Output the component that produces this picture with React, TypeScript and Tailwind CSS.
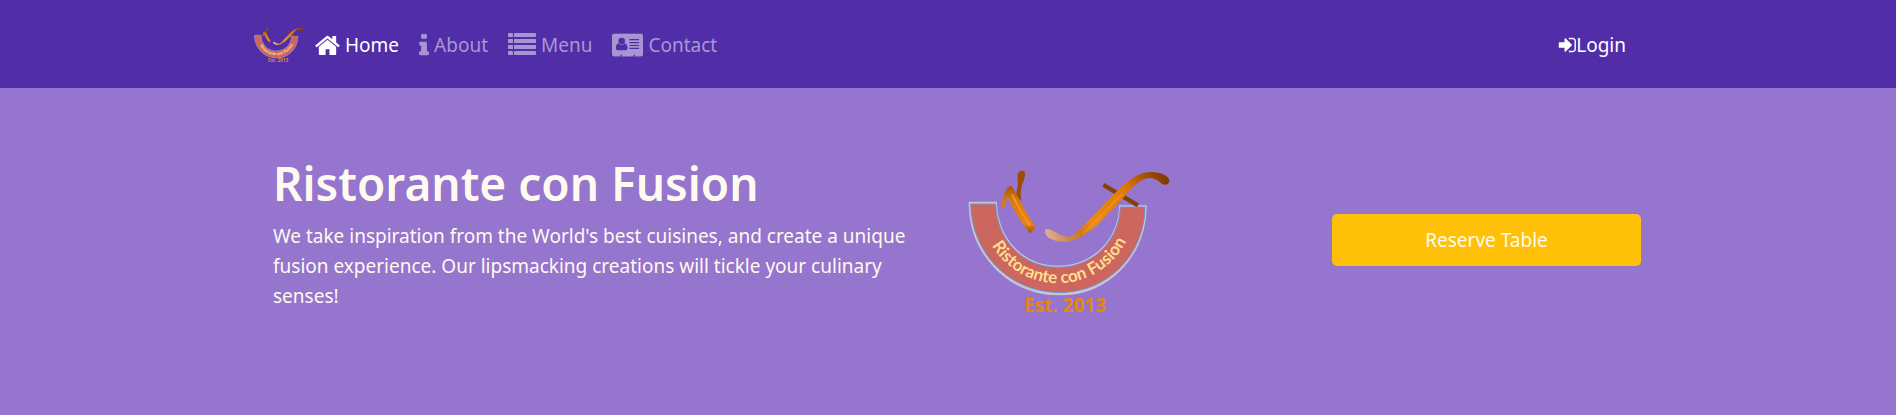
import type { ReactNode } from "react";

function Logo({ id, className }: { id: string; className: string }) {
  return (
    <svg viewBox="54 42 606 450" className={className} role="img" aria-label="Ristorante con Fusion">
      <defs>
        <linearGradient id={`${id}-gold`} x1="0" y1="0" x2="0" y2="1">
          <stop offset="0" stopColor="#a85506" />
          <stop offset="0.3" stopColor="#d87a10" />
          <stop offset="0.8" stopColor="#e88414" />
          <stop offset="1" stopColor="#9a4c00" />
        </linearGradient>
        <linearGradient id={`${id}-fork`} gradientUnits="userSpaceOnUse" x1="285" y1="240" x2="658" y2="75">
          <stop offset="0" stopColor="#e3b391" />
          <stop offset="0.14" stopColor="#c98a5c" />
          <stop offset="0.24" stopColor="#d07a1a" />
          <stop offset="0.36" stopColor="#ec8a16" />
          <stop offset="0.68" stopColor="#dd7a0c" />
          <stop offset="0.84" stopColor="#a65200" />
          <stop offset="1" stopColor="#7c3a00" />
        </linearGradient>
        <path id={`${id}-arc`} d="M94 154A230 231 0 0 0 554 154" />
      </defs>
      <path
        d="M60 144H137C141 252 215 336 324 336C431 336 508 254 511 155H586C584 302 474 417 330 417C174 417 61 294 60 144Z"
        fill="none"
        stroke="#c9c3d6"
        strokeWidth="8"
      />
      <path
        d="M62 147H137C141 254 215 337 324 337C431 337 508 256 511 156H585C583 300 474 412 328 412C176 412 64 292 62 147Z"
        fill="#cd665e"
        stroke="#6c93c8"
        strokeWidth="3"
      />
      <path
        d="M203 72C200 50 211 46 220 48C230 53 224 71 217 88C212 102 211 118 214 138L198 124C200 104 206 90 203 72Z"
        fill="#9c4e04"
      />
      <path
        d="M156 159C154 132 166 101 179 93C188 93 190 101 195 110C215 148 236 188 258 216L240 235C217 208 190 164 173 127C167 136 164 146 164 158Z"
        fill={`url(#${id}-gold)`}
      />
      <path d="M186 118C204 154 222 186 241 213" fill="none" stroke="#f39522" strokeWidth="6" />
      <path d="M466 93L558 148" stroke="#844103" strokeWidth="13" strokeLinecap="square" />
      <path
        d="M286 223C305 217 330 247 358 245C384 234 408 203 437 174L498 111C532 78 563 51 604 51C632 51 656 62 658 77C656 92 642 92 632 84C616 68 598 66 584 72C550 86 530 118 504 147L442 210C410 236 381 257 350 260C316 262 280 249 286 223Z"
        fill={`url(#${id}-fork)`}
      />
      <path d="M402 233C432 207 478 154 518 115" fill="none" stroke="#f99a28" strokeWidth="5" opacity="0.55" />
      <text
        fontFamily='Lato, "Open Sans", sans-serif'
        fontWeight="700"
        fontSize="51"
        fill="#ffdf8e"
        textAnchor="middle"
      >
        <textPath href={`#${id}-arc`} startOffset="51%">Ristorante con Fusion</textPath>
      </text>
      <text
        x="345"
        y="471"
        fontFamily='"Noto Sans", sans-serif'
        fontWeight="700"
        fontSize="57"
        fill="#e8860c"
        textAnchor="middle"
      >
        Est. 2013
      </text>
    </svg>
  );
}

function HomeIcon() {
  return (
    <svg viewBox="64 0 1664 1792" className="h-[27px] w-[25px] shrink-0" fill="currentColor" aria-hidden="true">
      <path d="M1472 992v480q0 26-19 45t-45 19h-384v-384h-256v384h-384q-26 0-45-19t-19-45v-480q0-1 .5-3t.5-3l575-474 575 474q1 2 1 6zm223-69l-62 74q-8 9-21 11h-3q-13 0-21-7l-692-577-692 577q-12 8-24 7-13-2-21-11l-62-74q-8-10-7-23.5t11-21.5l719-599q32-26 76-26t76 26l244 204v-195q0-14 9-23t23-9h192q14 0 23 9t9 23v408l219 182q10 8 11 21.5t-7 23.5z" />
    </svg>
  );
}

function InfoIcon() {
  return (
    <svg viewBox="576 0 640 1792" className="h-[27px] w-[10px] shrink-0" fill="currentColor" aria-hidden="true">
      <path d="M1216 1344v128q0 26-19 45t-45 19h-512q-26 0-45-19t-19-45v-128q0-26 19-45t45-19h64v-384h-64q-26 0-45-19t-19-45v-128q0-26 19-45t45-19h384q26 0 45 19t19 45v576h64q26 0 45 19t19 45zm-128-1152v192q0 26-19 45t-45 19h-256q-26 0-45-19t-19-45v-192q0-26 19-45t45-19h256q26 0 45 19t19 45z" />
    </svg>
  );
}

function ListIcon() {
  return (
    <svg viewBox="0 0 28 27" className="h-[27px] w-[28px] shrink-0" fill="currentColor" aria-hidden="true">
      {[1, 7, 13, 19].map((y) => (
        <g key={y}>
          <rect x="0" y={y} width="5" height="4" rx="0.4" />
          <rect x="6" y={y} width="22" height="4" rx="0.4" />
        </g>
      ))}
    </svg>
  );
}

function CardIcon() {
  return (
    <svg viewBox="0 0 32 27" className="h-[27px] w-[31px] shrink-0" aria-hidden="true">
      <mask id="card-cutouts">
        <rect x="0" y="1" width="32" height="24" rx="2.5" fill="white" />
        <circle cx="10" cy="8.8" r="3.4" fill="black" />
        <path
          d="M7 11.2C5 11.8 4 13.4 4 15.800C4 17.500 4.800 18.500 6 18.500H14C15.200 18.500 16 17.500 16 15.800C16 13.400 15 11.800 13 11.200C11.500 13.400 8.500 13.400 7 11.200Z"
          fill="black"
        />
        <path d="M18 7.500H28M18 10.500H28M18 13.500H28M18 16.500H28" stroke="black" strokeWidth="1.200" />
        <path d="M9.500 23V25M23 23V25" stroke="black" strokeWidth="1.500" />
      </mask>
      <rect x="0" y="1" width="32" height="24" fill="currentColor" mask="url(#card-cutouts)" />
    </svg>
  );
}

function SignInIcon() {
  return (
    <svg viewBox="64 0 1600 1792" className="h-5 w-[18px] shrink-0" fill="currentColor" aria-hidden="true">
      <path d="M1312 896q0 26-19 45l-544 544q-19 19-45 19t-45-19-19-45v-288h-448q-26 0-45-19t-19-45v-384q0-26 19-45t45-19h448v-288q0-26 19-45t45-19 45 19l544 544q19 19 19 45zm352-352v704q0 119-84.5 203.5t-203.5 84.5h-320q-13 0-22.5-9.5t-9.5-22.5q0-4-1-20t-.5-26.5 3-23.5 10-19.5 20.5-6.5h320q66 0 113-47t47-113v-704q0-66-47-113t-113-47h-312l-11.5-1-11.5-3-8-5.5-7-9-2-13.5q0-4-1-20t-.5-26.5 3-23.5 10-19.5 20.5-6.5h320q119 0 203.5 84.5t84.5 203.5z" />
    </svg>
  );
}

function NavItem({ href, icon, label, active }: { href: string; icon: ReactNode; label: string; active?: boolean }) {
  return (
    <li>
      <a
        href={href}
        aria-current={active ? "page" : undefined}
        className={`flex items-center gap-[5px] ${active ? "text-white" : "text-white/50 hover:text-white/75"}`}
      >
        {icon}
        {label}
      </a>
    </li>
  );
}

export default function App() {
  return (
    <div className="min-h-screen bg-[#9575cd] font-['Noto_Sans','Open_Sans',sans-serif] text-[19px] leading-[30px]">
      <nav className="bg-[#512da8] px-5 pt-[21px] pb-[19px]">
        <div className="mx-auto flex min-h-12 max-w-[1388px] flex-wrap items-center">
          <a href="#home" className="mr-[11px] block">
            <Logo id="brand" className="h-[37px] w-[50px]" />
          </a>
          <ul className="flex flex-wrap items-center gap-x-5">
            <NavItem href="#home" icon={<HomeIcon />} label="Home" active />
            <NavItem href="#about" icon={<InfoIcon />} label="About" />
            <NavItem href="#menu" icon={<ListIcon />} label="Menu" />
            <NavItem href="#contact" icon={<CardIcon />} label="Contact" />
          </ul>
          <button type="button" className="mr-4 ml-auto flex cursor-pointer items-center text-white">
            <SignInIcon />
            Login
          </button>
        </div>
      </nav>
      <header className="px-5 pt-[57px] pb-16 text-[#fffaf0]">
        <div className="mx-auto flex max-w-[1386px] flex-wrap items-center gap-y-8 pl-[18px]">
          <div className="min-w-80 flex-1 pr-8">
            <h1 className="mb-2 text-[46px] leading-[60px] font-semibold">Ristorante con Fusion</h1>
            <p>
              We take inspiration from the World's best cuisines, and create a unique fusion experience. Our
              lipsmacking creations will tickle your culinary senses!
            </p>
          </div>
          <div className="w-[364px] pt-6">
            <Logo id="hero" className="h-[150px] w-[202px]" />
          </div>
          <button
            type="button"
            className="mt-4 w-[309px] cursor-pointer rounded-[5px] bg-[#ffc107] px-4 py-[11px] text-center"
          >
            Reserve Table
          </button>
        </div>
      </header>
    </div>
  );
}
